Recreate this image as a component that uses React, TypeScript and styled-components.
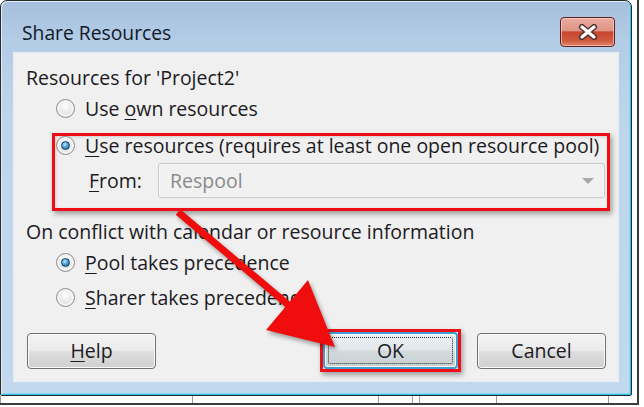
import React from 'react';
import styled, { createGlobalStyle } from 'styled-components';

const Global = createGlobalStyle`
  html, body { margin: 0; padding: 0; background: #fff; }
  body { width: 644px; height: 407px; overflow: hidden; font-family: "Open Sans", "Noto Sans", sans-serif; color: #1c1a22; }
`;

const Stage = styled.div`
  position: relative;
  width: 644px;
  height: 407px;
  background: #fff;
`;

const Backdrop = styled.div`
  width: 639px;
  height: 405px;
  box-sizing: border-box;
  border-right: 2px solid #3c3c3c;
  border-bottom: 2px solid #3c3c3c;
  display: flex;
  flex-direction: column;
`;

const GridStrip = styled.div`
  flex: 1;
  display: flex;
`;

const GridCell = styled.div<{ $w: number }>`
  width: ${p => p.$w}px;
  border-left: 1px solid #9a9a9a;
  flex-shrink: 0;
`;

const Window = styled.div`
  width: 632px;
  height: 396px;
  box-sizing: border-box;
  border: 1px solid #2a2a2a;
  border-radius: 7px 7px 2px 2px;
  background: linear-gradient(180deg, #a4bfdc 0px, #b4cce6 40px, #bfd5ec 120px, #c2d8ee 100%);
  box-shadow: inset 1px 1px 0 #e2edf8, inset -1px -1px 0 #2fc0ec, inset -2px -2px 0 #8fd8f2;
  display: flex;
  flex-direction: column;
  flex-shrink: 0;
`;

const TitleBar = styled.div`
  height: 51px;
  box-sizing: border-box;
  padding: 12px 16px 0 21px;
  display: flex;
  align-items: center;
  justify-content: space-between;
`;

const TitleText = styled.span`
  font-size: 19.3px;
  color: #101828;
`;

const CloseButton = styled.div`
  width: 55px;
  height: 30px;
  box-sizing: border-box;
  border: 1px solid #5b2020;
  border-radius: 4px;
  background: linear-gradient(180deg, #e9aca0 0%, #df9484 45%, #c8442e 50%, #cf5a3e 80%, #e08468 100%);
  box-shadow: inset 0 0 0 1px rgba(255, 220, 210, 0.6);
  display: flex;
  align-items: center;
  justify-content: center;
  margin-top: -1px;
`;

const Content = styled.div`
  margin: 0 12px 0 12px;
  height: 330px;
  box-sizing: border-box;
  background: #f0f0f0;
  border: 1px solid #e4ecf4;
  padding: 10px 11px 0 12px;
  display: flex;
  flex-direction: column;
`;

const GroupLabel = styled.div<{ $mt?: number }>`
  height: 30px;
  line-height: 30px;
  font-size: 19.5px;
  margin-top: ${p => p.$mt ?? 0}px;
  white-space: nowrap;
`;

const RadioRow = styled.div<{ $mt?: number; $h?: number; $indent?: number }>`
  display: flex;
  align-items: center;
  gap: 10px;
  height: ${p => p.$h ?? 30}px;
  margin-top: ${p => p.$mt ?? 0}px;
  margin-left: ${p => p.$indent ?? 30}px;
  font-size: 19.5px;
  white-space: nowrap;
`;

const RadioCircle = styled.span<{ $checked?: boolean }>`
  width: 19px;
  height: 19px;
  border-radius: 50%;
  box-sizing: border-box;
  border: 1px solid #8a8d92;
  background: radial-gradient(circle at 50% 35%, #ffffff 0%, #e6e7e9 55%, #c9cbcf 100%);
  box-shadow: inset 0 0 0 2px #f5f5f5;
  display: flex;
  align-items: center;
  justify-content: center;
  flex-shrink: 0;

  &::after {
    content: '';
    display: ${p => (p.$checked ? 'block' : 'none')};
    width: 9px;
    height: 9px;
    box-sizing: border-box;
    border-radius: 50%;
    border: 1px solid #173f60;
    background: radial-gradient(circle at 40% 35%, #c9ecff 0%, #46a2dc 45%, #1c5585 100%);
  }
`;

const Key = styled.span`
  text-decoration: underline;
  text-underline-offset: 3px;
`;

const Highlight = styled.div`
  margin-top: 10px;
  margin-left: 26px;
  width: 558px;
  height: 78px;
  box-sizing: border-box;
  border: 3px solid #ee0f16;
  box-shadow: 2px 3px 5px rgba(0, 0, 0, 0.35), inset 1px 1px 3px rgba(0, 0, 0, 0.15);
  padding: 0 2px 0 1px;
  display: flex;
  flex-direction: column;
`;

const FromRow = styled.div`
  display: flex;
  align-items: center;
  margin-top: 9px;
  padding-left: 33px;
  font-size: 19.5px;
`;

const FromLabel = styled.span`
  width: 69px;
  flex-shrink: 0;
`;

const Combo = styled.div`
  width: 448px;
  height: 35px;
  box-sizing: border-box;
  border: 1px solid #c9c9c9;
  border-radius: 3px;
  background: #f1f1f1;
  box-shadow: inset 0 0 0 1px #f8f8f8;
  display: flex;
  align-items: center;
  justify-content: space-between;
  padding: 0 10px 0 11px;
  color: #8a8a8a;
`;

const ComboArrow = styled.span`
  width: 0;
  height: 0;
  border-left: 6px solid transparent;
  border-right: 6px solid transparent;
  border-top: 6px solid #a8a8a8;
`;

const ButtonRow = styled.div`
  margin-top: 17px;
  display: flex;
  align-items: center;
  padding: 0 1px 0 1px;
`;

const Spacer = styled.div`
  flex: 1;
`;

const Button = styled.div<{ $w?: number }>`
  width: ${p => p.$w ?? 129}px;
  height: 36px;
  box-sizing: border-box;
  border: 1px solid #707070;
  border-radius: 4px;
  background: linear-gradient(180deg, #f3f3f3 0%, #ebebeb 48%, #dddddd 52%, #d0d0d0 100%);
  box-shadow: inset 0 0 0 1px #fbfbfb;
  display: flex;
  align-items: center;
  justify-content: center;
  font-size: 19.5px;
`;

const OkFrame = styled.div`
  border: 3px solid #ee0f16;
  box-shadow: 2px 3px 5px rgba(0, 0, 0, 0.35);
  margin-right: 16px;
  display: flex;
`;

const OkButton = styled(Button)`
  border: 2px solid #3c9fd0;
  height: 37px;
  position: relative;
  background: linear-gradient(180deg, #eaf0f3 0%, #e1e7eb 48%, #d3dade 52%, #c9d0d4 100%);

  &::before {
    content: '';
    position: absolute;
    inset: 3px;
    border: 1px dotted #2a2a2a;
    border-radius: 2px;
  }
`;

const Arrow = styled.svg`
  position: absolute;
  left: 0;
  top: 0;
  pointer-events: none;
  filter: drop-shadow(2px 3px 2px rgba(0, 0, 0, 0.35));
`;

export default function App() {
  return (
    <Stage>
      <Global />
      <Backdrop>
        <Window>
          <TitleBar>
            <TitleText>Share Resources</TitleText>
            <CloseButton>
              <svg width="22" height="16" viewBox="0 0 22 16">
                <path d="M5 3 L17 13 M17 3 L5 13" stroke="#4a2a2a" strokeWidth="6" strokeLinecap="round" />
                <path d="M5 3 L17 13 M17 3 L5 13" stroke="#ffffff" strokeWidth="3.4" strokeLinecap="round" />
              </svg>
            </CloseButton>
          </TitleBar>
          <Content>
            <GroupLabel>Resources for 'Project2'</GroupLabel>
            <RadioRow>
              <RadioCircle />
              <span>
                Use <Key>o</Key>wn resources
              </span>
            </RadioRow>
            <Highlight>
              <RadioRow $h={18} $indent={0}>
                <RadioCircle $checked />
                <span>
                  <Key>U</Key>se resources (requires at least one open resource pool)
                </span>
              </RadioRow>
              <FromRow>
                <FromLabel>
                  <Key>F</Key>rom:
                </FromLabel>
                <Combo>
                  <span>Respool</span>
                  <ComboArrow />
                </Combo>
              </FromRow>
            </Highlight>
            <GroupLabel $mt={6}>On conflict with calendar or resource information</GroupLabel>
            <RadioRow>
              <RadioCircle $checked />
              <span>
                <Key>P</Key>ool takes precedence
              </span>
            </RadioRow>
            <RadioRow $mt={5}>
              <RadioCircle />
              <span>
                <Key>S</Key>harer takes precedence
              </span>
            </RadioRow>
            <ButtonRow>
              <Button>
                <span>
                  <Key>H</Key>elp
                </span>
              </Button>
              <Spacer />
              <OkFrame>
                <OkButton $w={135}>OK</OkButton>
              </OkFrame>
              <Button>Cancel</Button>
            </ButtonRow>
          </Content>
        </Window>
        <GridStrip>
          <GridCell $w={191} />
          <GridCell $w={185} />
          <GridCell $w={33} />
          <GridCell $w={6} />
          <GridCell $w={76} />
          <GridCell $w={111} />
          <GridCell $w={20} />
        </GridStrip>
      </Backdrop>
      <Arrow width="644" height="407" viewBox="0 0 644 407">
        <line x1="178" y1="212" x2="292" y2="308" stroke="#f00d0d" strokeWidth="7" />
        <polygon points="335,347 266,330 308,280" fill="#f00d0d" />
      </Arrow>
    </Stage>
  );
}
